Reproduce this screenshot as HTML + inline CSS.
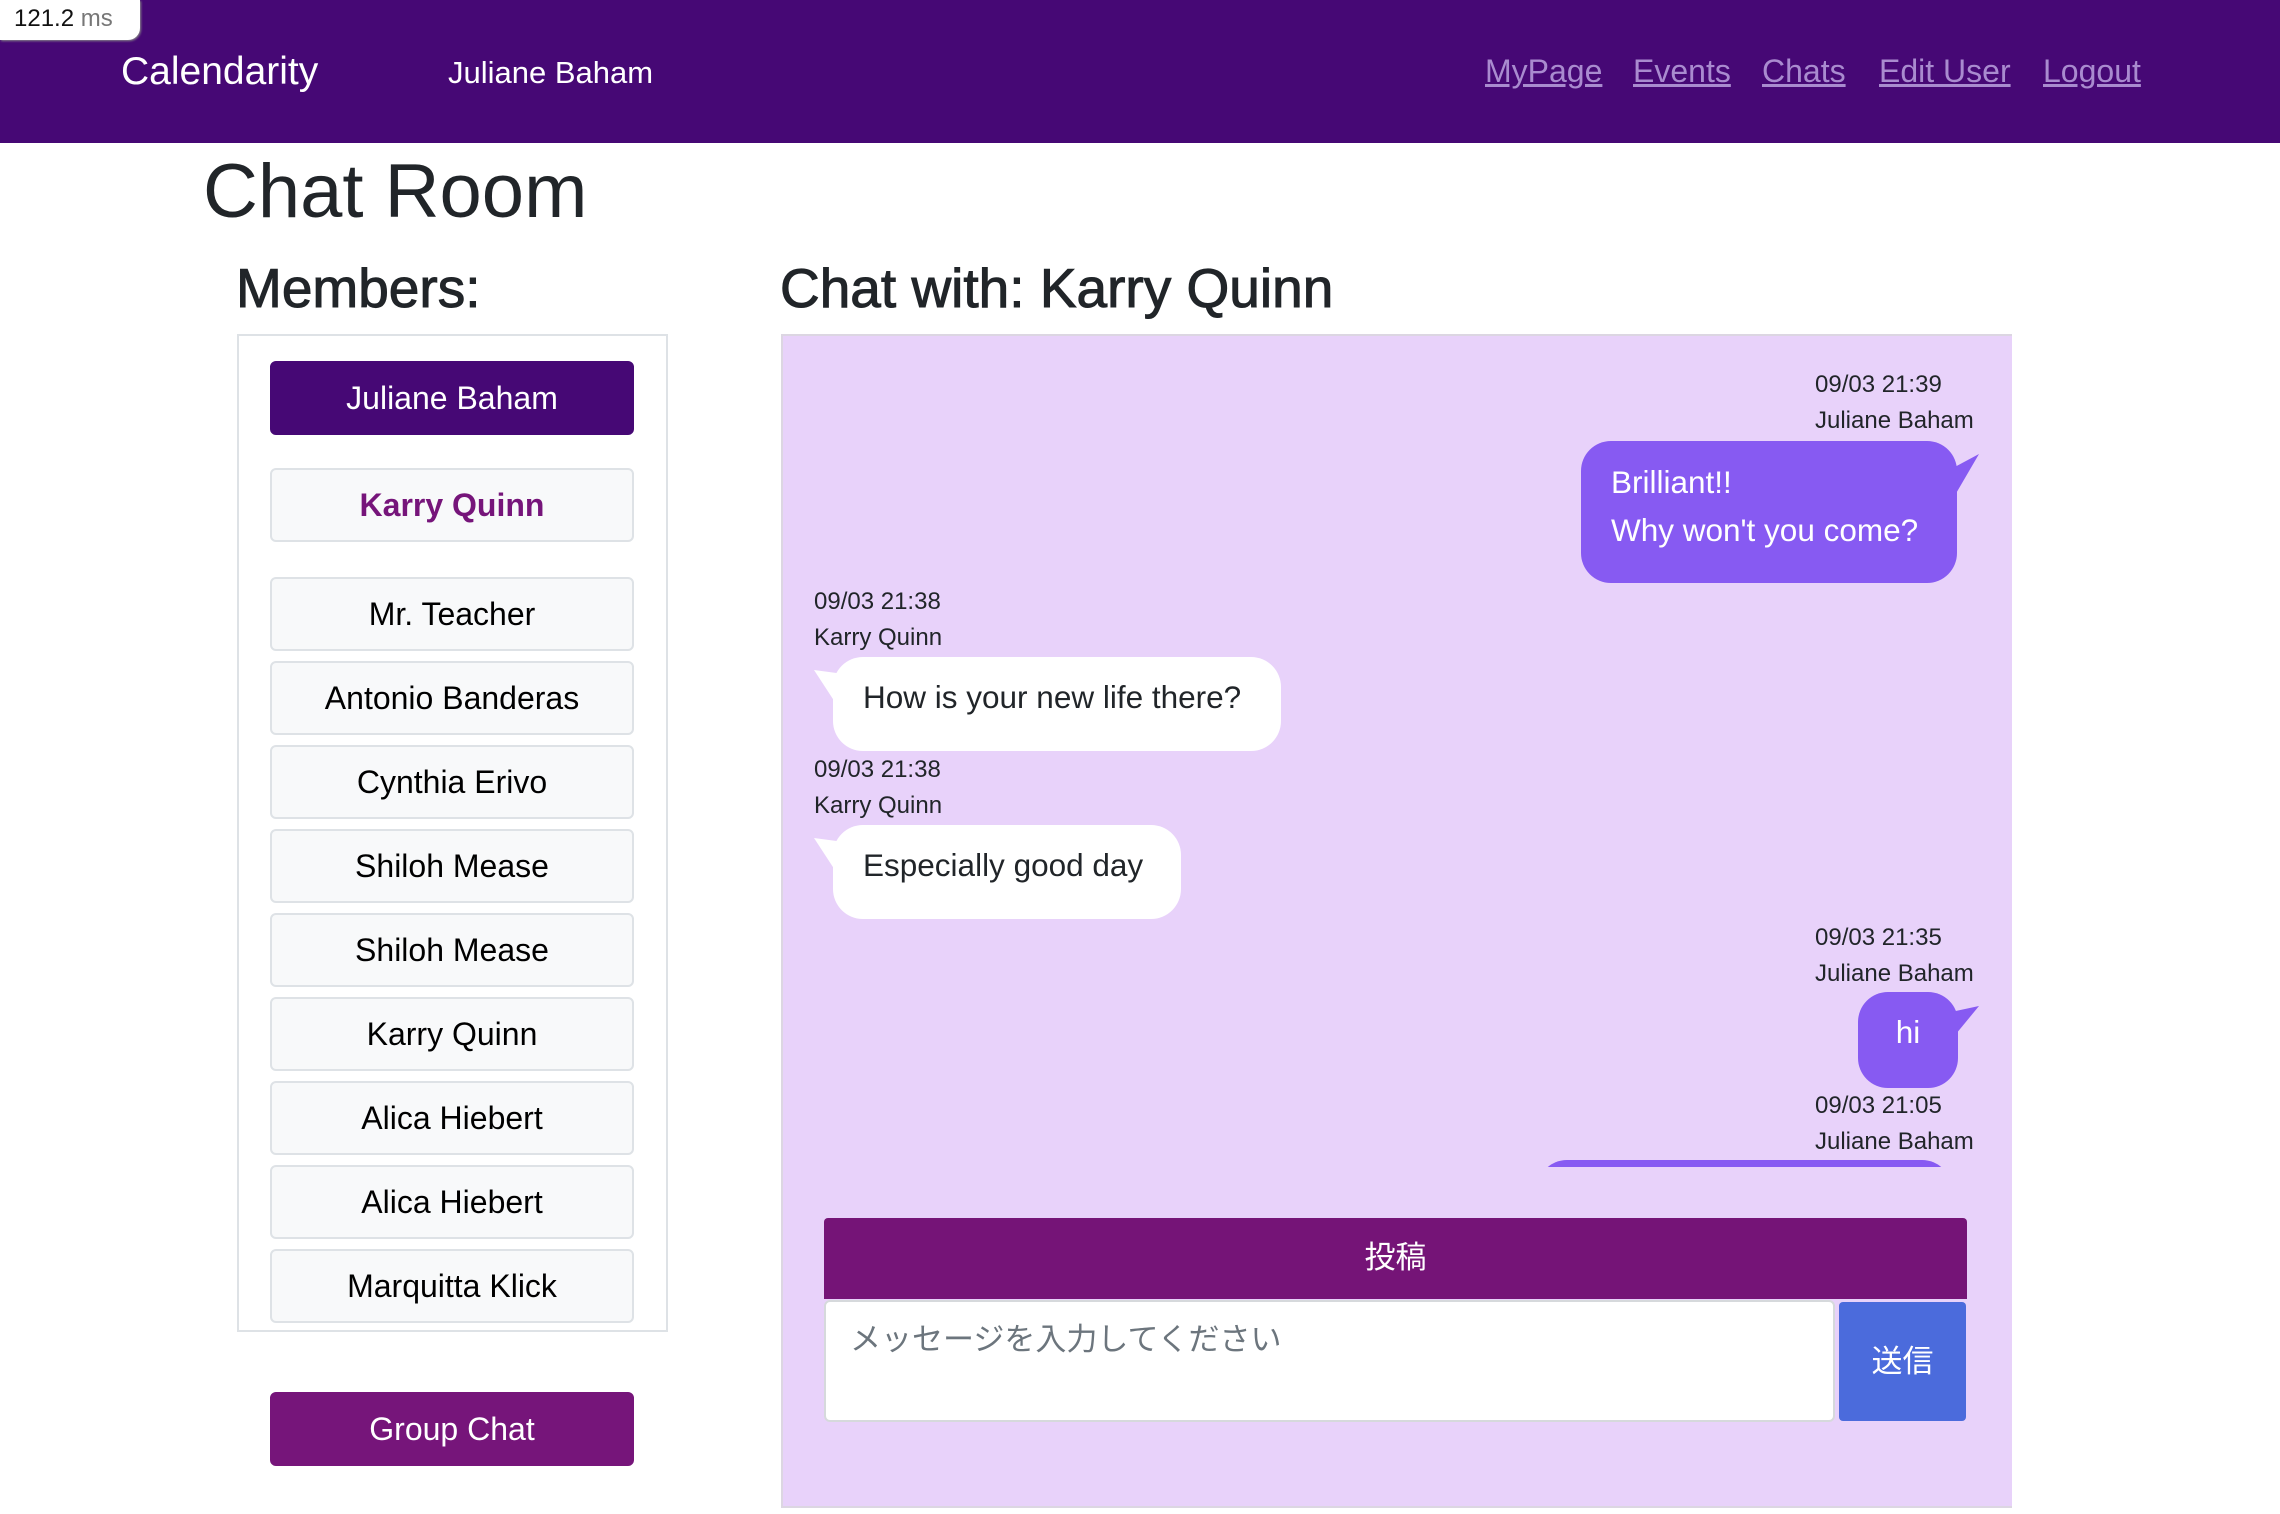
<!DOCTYPE html>
<html><head><meta charset="utf-8"><style>
*{box-sizing:border-box;margin:0;padding:0}
body{width:2280px;height:1514px;background:#fff;position:relative;overflow:hidden;font-family:"Liberation Sans","Noto Sans CJK JP",sans-serif;color:#212529}
.a{position:absolute;white-space:nowrap}
.nav{position:absolute;left:0;top:0;width:2280px;height:143px;background:#460875}
.nl{color:#a98bcf;text-decoration:underline;font-size:32px;top:53px}
.mb{position:absolute;left:270px;width:364px;height:74px;background:#f8f9fa;border:2px solid #dee2e6;border-radius:6px;font-size:32px;text-align:center;line-height:70px;color:#000}
.t{font-size:24px;color:#212529}
.bub{position:absolute;border-radius:30px;font-size:31.5px}
.r{background:#875af2;color:#fff}
.l{background:#fff;color:#212529}
</style></head><body>
<div class="nav"></div>
<div class="a" style="left:0;top:0;width:140px;height:40px;background:#fff;border-bottom-right-radius:12px;box-shadow:1px 1px 2px #888;font-size:24px;line-height:38px;padding-left:14px;color:#111">121.2 <span style="color:#777">ms</span></div>
<div class="a" style="left:121px;top:50px;font-size:39px;color:#fff">Calendarity</div>
<div class="a" style="left:448px;top:55px;font-size:31px;color:#fff">Juliane Baham</div>
<div class="a nl" style="left:1485px">MyPage</div>
<div class="a nl" style="left:1633px">Events</div>
<div class="a nl" style="left:1762px">Chats</div>
<div class="a nl" style="left:1879px">Edit User</div>
<div class="a nl" style="left:2043px">Logout</div>

<div class="a" style="left:203px;top:148px;font-size:76px;color:#212529">Chat Room</div>
<div class="a" style="left:236px;top:256px;font-size:55px;-webkit-text-stroke:1px #212529">Members:</div>
<div class="a" style="left:780px;top:256px;font-size:55px;-webkit-text-stroke:1px #212529">Chat with: Karry Quinn</div>

<div class="a" style="left:237px;top:334px;width:431px;height:998px;border:2px solid #dee2e6"></div>
<div class="mb" style="top:361px;background:#460875;border-color:#460875;color:#fff">Juliane Baham</div>
<div class="mb" style="top:468px;color:#76157a;font-weight:bold">Karry Quinn</div>
<div class="mb" style="top:577px">Mr. Teacher</div>
<div class="mb" style="top:661px">Antonio Banderas</div>
<div class="mb" style="top:745px">Cynthia Erivo</div>
<div class="mb" style="top:829px">Shiloh Mease</div>
<div class="mb" style="top:913px">Shiloh Mease</div>
<div class="mb" style="top:997px">Karry Quinn</div>
<div class="mb" style="top:1081px">Alica Hiebert</div>
<div class="mb" style="top:1165px">Alica Hiebert</div>
<div class="mb" style="top:1249px">Marquitta Klick</div>
<div class="mb" style="top:1392px;background:#76157a;border-color:#76157a;color:#fff">Group Chat</div>

<div class="a" style="left:781px;top:334px;width:1231px;height:1174px;background:#e8d2fa;border-top:2px solid #dcd6e2;border-left:2px solid #dcd6e2;border-bottom:2px solid #dcd6e2"></div>
<div class="a" style="left:781px;top:336px;width:1231px;height:831px;overflow:hidden">
 <div class="a t" style="left:1034px;top:35px">09/03 21:39</div>
 <div class="a t" style="left:1034px;top:71px">Juliane Baham</div>
 <svg class="a" style="left:1170px;top:118px" width="30" height="50"><polygon points="0,15 28,0 0,48" fill="#875af2"/></svg>
 <div class="bub r" style="left:800px;top:105px;width:376px;height:142px;padding:17px 0 0 30px;line-height:48px">Brilliant!!<br>Why won't you come?</div>

 <div class="a t" style="left:33px;top:252px">09/03 21:38</div>
 <div class="a t" style="left:33px;top:288px">Karry Quinn</div>
 <svg class="a" style="left:33px;top:332px" width="30" height="50"><polygon points="0,2 30,6 30,48" fill="#fff"/></svg>
 <div class="bub l" style="left:52px;top:321px;width:448px;height:94px;padding:0 0 0 30px;line-height:80px">How is your new life there?</div>

 <div class="a t" style="left:33px;top:420px">09/03 21:38</div>
 <div class="a t" style="left:33px;top:456px">Karry Quinn</div>
 <svg class="a" style="left:33px;top:500px" width="30" height="50"><polygon points="0,2 30,6 30,48" fill="#fff"/></svg>
 <div class="bub l" style="left:52px;top:489px;width:348px;height:94px;padding:0 0 0 30px;line-height:80px">Especially good day</div>

 <div class="a t" style="left:1034px;top:588px">09/03 21:35</div>
 <div class="a t" style="left:1034px;top:624px">Juliane Baham</div>
 <svg class="a" style="left:1170px;top:670px" width="30" height="50"><polygon points="0,6 28,0 0,34" fill="#875af2"/></svg>
 <div class="bub r" style="left:1077px;top:656px;width:100px;height:96px;text-align:center;line-height:80px">hi</div>

 <div class="a t" style="left:1034px;top:756px">09/03 21:05</div>
 <div class="a t" style="left:1034px;top:792px">Juliane Baham</div>
 <div class="bub r" style="left:756px;top:824px;width:415px;height:60px"></div>
</div>

<div class="a" style="left:824px;top:1218px;width:1143px;height:81px;background:#751477;border-radius:4px 4px 0 0;color:#fff;font-size:31px;text-align:center;line-height:80px">投稿</div>
<div class="a" style="left:824px;top:1300px;width:1011px;height:122px;background:#fff;border:2px solid #d6d9dc;border-radius:6px;color:#6c757d;font-size:31px;padding:12px 0 0 24px">メッセージを入力してください</div>
<div class="a" style="left:1839px;top:1302px;width:127px;height:119px;background:#4b6bdc;border-radius:4px;color:#fff;font-size:31px;text-align:center;line-height:120px">送信</div>
</body></html>
